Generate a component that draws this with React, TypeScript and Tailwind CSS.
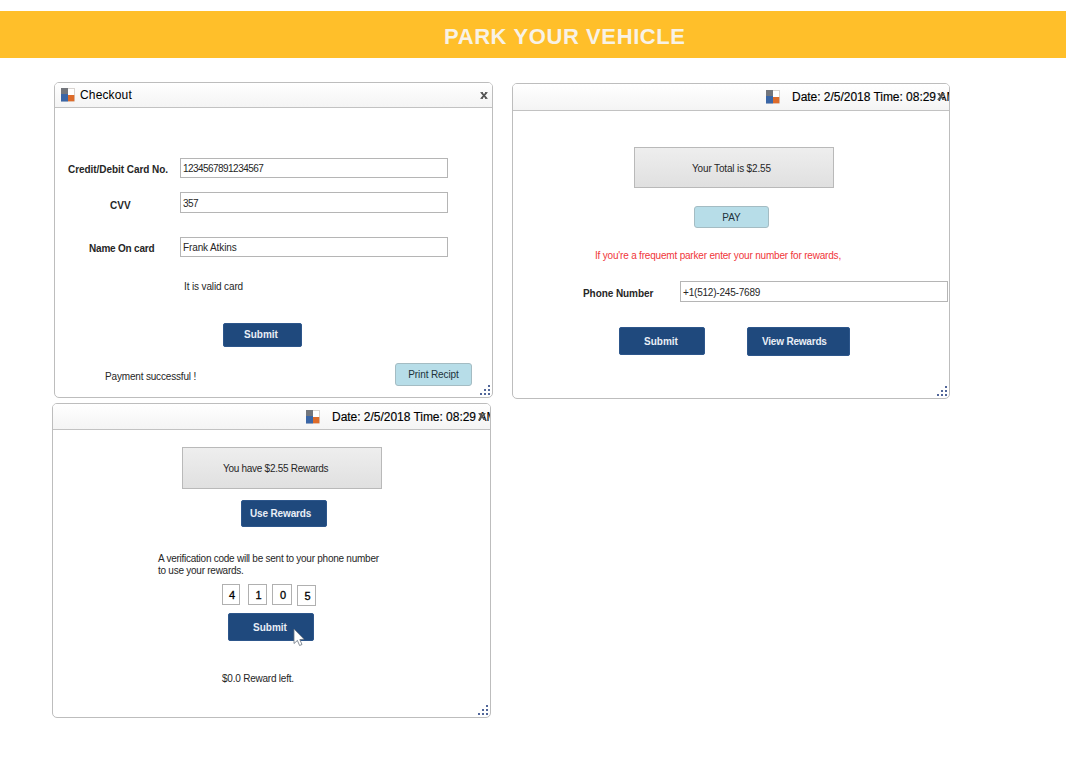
import type { ReactNode } from "react";

function AppIcon() {
  return (
    <svg width="14" height="14" viewBox="0 0 14 14" className="block shrink-0">
      <rect x="0.5" y="0.5" width="13" height="12.5" fill="#fff" stroke="#d9d4d0" />
      <rect width="7" height="7" fill="#73767c" />
      <rect y="6" width="7" height="7.5" fill="#3a66a6" />
      <rect x="7" y="7" width="6.3" height="6.3" fill="#dd6b2a" />
    </svg>
  );
}

function ResizeGrip() {
  return (
    <svg width="11" height="11" viewBox="0 0 11 11" fill="#52679a" className="absolute right-px bottom-px">
      <rect x="8" y="0" width="2" height="2" />
      <rect x="4" y="4" width="2" height="2" />
      <rect x="8" y="4" width="2" height="2" />
      <rect x="0" y="8" width="2" height="2" />
      <rect x="4" y="8" width="2" height="2" />
      <rect x="8" y="8" width="2" height="2" />
    </svg>
  );
}

function CloseMark({ className }: { className: string }) {
  return (
    <svg width="8" height="7" viewBox="0 0 8 7" className={className} fill="none" stroke="#555" strokeWidth="1.7">
      <path d="M1.5 0.6 6.5 6.4M6.5 0.6 1.5 6.4" />
      <path d="M0.4 0.6H3M5 0.6H7.6M0.4 6.4H3M5 6.4H7.6" strokeWidth="0.9" />
    </svg>
  );
}

function Window({ className, bar, title, children }: { className: string; bar: string; title: ReactNode; children: ReactNode }) {
  return (
    <section className={`relative flex flex-col overflow-hidden rounded-[5px] border border-[#bdbdbd] bg-white ${className}`}>
      <header className={`flex shrink-0 items-center border-b border-[#c2c2c2] bg-linear-to-b from-white to-[#f4f4f4] ${bar}`}>{title}</header>
      {children}
      <ResizeGrip />
    </section>
  );
}

function DateTitle() {
  return (
    <>
      <AppIcon />
      <span className="ml-3 text-[12px] leading-[14px] tracking-[-0.03px] whitespace-nowrap text-black [-webkit-text-stroke:0.15px_#000]">
        Date: 2/5/2018 Time: 08:29 AM
      </span>
      <CloseMark className="absolute top-[9px] right-[4px]" />
    </>
  );
}

function Input({ className, children }: { className: string; children: ReactNode }) {
  return <div className={`flex w-[268px] shrink-0 border border-[#b5b5b5] bg-white pl-0.5 whitespace-nowrap ${className}`}>{children}</div>;
}

function Button({ className, children }: { className: string; children: ReactNode }) {
  return (
    <button className={`flex shrink-0 items-center rounded-[2px] border border-[#2d568b] bg-[#1f497d] font-bold whitespace-nowrap text-[#e9eef6] ${className}`}>
      {children}
    </button>
  );
}

function LightButton({ className, children }: { className: string; children: ReactNode }) {
  return (
    <button className={`flex shrink-0 items-center justify-center rounded-[3px] border border-[#a4bcc3] bg-[#b7dde8] pt-px whitespace-nowrap text-[#20323a] ${className}`}>
      {children}
    </button>
  );
}

function Summary({ className, children }: { className: string; children: ReactNode }) {
  return (
    <div className={`flex w-[200px] shrink-0 items-center border border-[#b9b9b9] bg-linear-to-b from-[#eeeeee] to-[#e0e0e0] pt-[2px] whitespace-nowrap ${className}`}>
      {children}
    </div>
  );
}

function Digit({ className, children }: { className: string; children: ReactNode }) {
  return <div className={`flex h-[21px] items-center justify-center border border-[#b0b0b0] pt-px pl-[2px] ${className}`}>{children}</div>;
}

function Checkout() {
  return (
    <Window
      className="ml-[54px] h-[316px] w-[439px]"
      bar="h-[25px] pl-[6px]"
      title={
        <>
          <AppIcon />
          <span className="ml-[5px] text-[12px] leading-[14px] tracking-[0.15px] text-black">Checkout</span>
          <CloseMark className="absolute top-[9px] right-[4px]" />
        </>
      }
    >
      <div className="mt-[50px] flex h-5">
        <span className="w-[125px] pt-[6px] pl-[13px] font-bold tracking-[-0.05px] whitespace-nowrap">Credit/Debit Card No.</span>
        <Input className="h-5 pt-[4px] tracking-[-0.55px]">1234567891234567</Input>
      </div>
      <div className="mt-[14px] flex h-[21px]">
        <span className="w-[125px] pt-[8px] pl-[55px] font-bold">CVV</span>
        <Input className="h-[21px] pt-[5px] tracking-[-0.5px]">357</Input>
      </div>
      <div className="mt-6 flex h-5">
        <span className="w-[125px] pt-[6px] pl-[34px] font-bold tracking-[-0.2px]">Name On card</span>
        <Input className="h-5 pt-[4px] tracking-[-0.12px]">Frank Atkins</Input>
      </div>
      <p className="mt-[24px] ml-[129px] tracking-[-0.13px]">It is valid card</p>
      <Button className="mt-[30px] ml-[168px] h-6 w-[79px] pl-5">Submit</Button>
      <div className="mt-4 ml-[50px] flex h-[23px] items-center">
        <p className="w-[290px] pt-[4px] tracking-[-0.17px]">Payment successful !</p>
        <LightButton className="h-[23px] w-[77px] tracking-[-0.1px]">Print Recipt</LightButton>
      </div>
    </Window>
  );
}

function Payment() {
  return (
    <Window className="mt-px ml-[19px] h-[316px] w-[438px]" bar="h-[27px] pl-[253px]" title={<DateTitle />}>
      <Summary className="mt-9 ml-[121px] h-[41px] pl-[57px] tracking-[-0.15px]">Your Total is $2.55</Summary>
      <LightButton className="mt-[18px] ml-[181px] h-[22px] w-[75px]">PAY</LightButton>
      <p className="mt-[22px] ml-[82px] tracking-[-0.19px] whitespace-nowrap text-[#f0363a]">
        If you&apos;re a frequemt parker enter your number for rewards,
      </p>
      <div className="mt-[19px] flex">
        <span className="w-[167px] pt-[7px] pl-[70px] font-bold tracking-[-0.07px]">Phone Number</span>
        <Input className="h-[21px] pt-[5px] tracking-[-0.2px]">+1(512)-245-7689</Input>
      </div>
      <div className="mt-[25px] ml-[106px] flex items-start gap-[42px]">
        <Button className="h-7 w-[86px] pt-px pl-6">Submit</Button>
        <Button className="h-[29px] w-[103px] pl-[14px] tracking-[-0.2px]">View Rewards</Button>
      </div>
    </Window>
  );
}

function Rewards() {
  return (
    <Window className="mt-[5px] ml-[52px] h-[315px] w-[439px]" bar="h-[26px] pl-[253px]" title={<DateTitle />}>
      <Summary className="mt-[17px] ml-[129px] h-[42px] pl-10 tracking-[-0.28px]">You have $2.55 Rewards</Summary>
      <Button className="mt-[11px] ml-[188px] h-[27px] w-[86px] pt-px pl-2 tracking-[-0.15px]">Use Rewards</Button>
      <p className="mt-[25px] ml-[105px] pt-px tracking-[-0.25px] whitespace-nowrap">
        A verification code will be sent to your phone number
        <br />
        to use your rewards.
      </p>
      <div className="mt-[7px] ml-[169px] flex items-start text-[11px] text-black [-webkit-text-stroke:0.3px_#000]">
        <Digit className="w-[18px]">4</Digit>
        <Digit className="ml-2 w-[19px]">1</Digit>
        <Digit className="ml-[5px] w-5">0</Digit>
        <Digit className="mt-px ml-[5px] w-[19px]">5</Digit>
      </div>
      <div className="relative mt-[7px] ml-[175px] w-[86px]">
        <Button className="h-7 w-[86px] pt-[2px] pl-6">Submit</Button>
        <svg width="12" height="19" viewBox="0 0 12 19" className="absolute top-[15px] left-[65px]">
          <path d="M1 1V15.5L4.4 12.5L6.6 17.5L9 16.5L6.8 11.6L11 11.2Z" fill="#fff" stroke="#6a7380" strokeWidth="0.8" />
        </svg>
      </div>
      <p className="mt-8 ml-[169px] tracking-[-0.22px]">$0.0 Reward left.</p>
    </Window>
  );
}

export default function App() {
  return (
    <div className="h-[776px] w-[1066px] overflow-hidden bg-white pt-[11px] font-['Liberation_Sans',Arial,sans-serif] text-[10px] leading-[12px] text-[#262626]">
      <h1 className="flex h-[47px] items-center bg-[#ffbf2a] pt-1 pl-[444px] text-[22px] leading-[26px] font-bold tracking-[0.6px] text-[#f8f2e6]">
        PARK YOUR VEHICLE
      </h1>
      <main className="mt-6 flex items-start">
        <div className="w-[493px]">
          <Checkout />
          <Rewards />
        </div>
        <Payment />
      </main>
    </div>
  );
}
